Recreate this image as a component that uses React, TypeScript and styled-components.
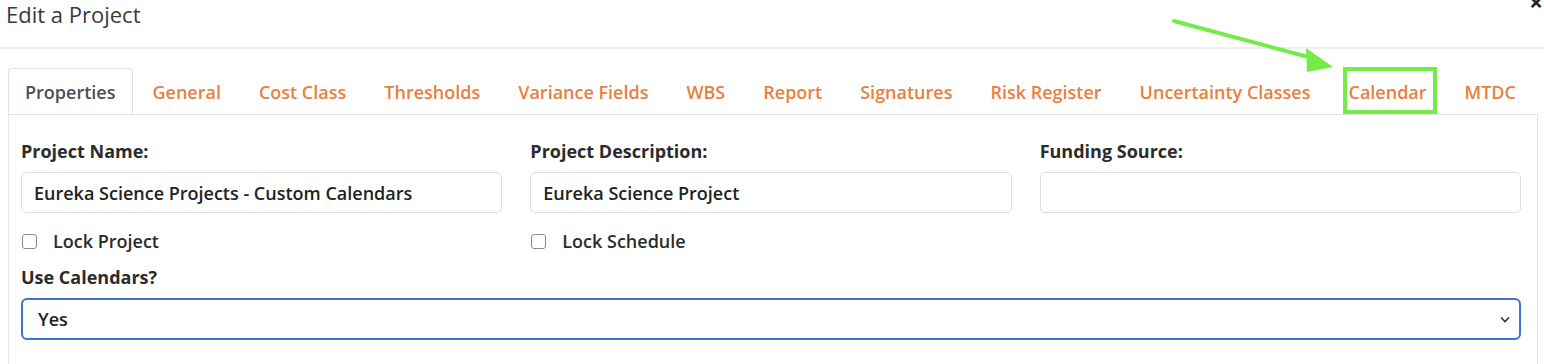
import styled, { createGlobalStyle } from "styled-components";

const GlobalStyle = createGlobalStyle`
  body {
    margin: 0;
    background: #ffffff;
    font-family: "Open Sans", "Liberation Sans", sans-serif;
    color: #333333;
  }
`;

const Modal = styled.div`
  position: relative;
  width: 1544px;
  height: 364px;
  overflow: hidden;
  background: #ffffff;
`;

const Header = styled.div`
  display: flex;
  justify-content: space-between;
  align-items: flex-start;
  height: 47px;
  border-bottom: 2px solid #eceef0;
  padding-left: 6px;
`;

const Title = styled.h1`
  margin: 0;
  font-size: 22px;
  font-weight: 400;
  line-height: 29px;
  color: #3a3a3a;
`;

const Close = styled.span`
  margin-top: -10px;
  margin-right: 1px;
  font-size: 24px;
  font-weight: 700;
  line-height: 24px;
  color: #222222;
`;

const Body = styled.div`
  padding: 19px 6px 0 8px;
`;

const TabList = styled.div`
  display: flex;
  height: 46px;
  border-bottom: 1px solid #dee2e6;
`;

const Tab = styled.div<{ $active?: boolean }>`
  height: 46px;
  line-height: 46px;
  padding: 0 ${(p) => (p.$active ? "17px 0 16px" : "18px")};
  border: 1px solid ${(p) => (p.$active ? "#dee2e6" : "transparent")};
  border-bottom-color: ${(p) => (p.$active ? "#ffffff" : "transparent")};
  border-radius: 4px 4px 0 0;
  font-size: 18px;
  font-weight: 600;
  color: ${(p) => (p.$active ? "#495057" : "#e8803f")};
  white-space: nowrap;
`;

const Panel = styled.div`
  height: 240px;
  border: 1px solid #e3e6e9;
  border-top: none;
  border-bottom: none;
  padding: 25px 16px 0 12px;
`;

const Grid = styled.div`
  display: grid;
  grid-template-columns: repeat(3, 1fr);
  column-gap: 28px;
`;

const Field = styled.div`
  display: flex;
  flex-direction: column;
`;

const Label = styled.label`
  font-size: 18px;
  font-weight: 700;
  line-height: 22px;
  color: #2b2b2b;
  margin-bottom: 10px;
`;

const TextInput = styled.div`
  height: 41px;
  box-sizing: border-box;
  border: 1px solid #dcdfe2;
  border-radius: 5px;
  padding: 0 12px;
  display: flex;
  align-items: center;
  font-size: 18px;
  font-weight: 600;
  color: #222222;
`;

const CheckRow = styled.div`
  display: flex;
  align-items: center;
  gap: 16px;
  margin-top: 18px;
  height: 20px;
  padding-left: 1px;
  font-size: 18px;
  font-weight: 600;
  color: #2b2b2b;
`;

const Box = styled.span`
  width: 13px;
  height: 13px;
  border: 1px solid #8a8a8a;
  border-radius: 3px;
  background: #ffffff;
`;

const SelectField = styled(Field)`
  margin-top: 15px;
`;

const Select = styled.div`
  height: 42px;
  box-sizing: border-box;
  border: 2px solid #3f71d6;
  border-radius: 6px;
  padding: 0 7px 0 15px;
  display: flex;
  align-items: center;
  justify-content: space-between;
  font-size: 18px;
  font-weight: 600;
  color: #222222;
`;

const Highlight = styled.div`
  position: absolute;
  left: 1343px;
  top: 67px;
  width: 86px;
  height: 39px;
  border: 4px solid #74ec48;
  pointer-events: none;
`;

const Arrow = styled.svg`
  position: absolute;
  left: 1160px;
  top: 10px;
  pointer-events: none;
`;

const tabs = [
  "Properties",
  "General",
  "Cost Class",
  "Thresholds",
  "Variance Fields",
  "WBS",
  "Report",
  "Signatures",
  "Risk Register",
  "Uncertainty Classes",
  "Calendar",
  "MTDC",
];

const fields = [
  { label: "Project Name:", value: "Eureka Science Projects - Custom Calendars", lock: "Lock Project" },
  { label: "Project Description:", value: "Eureka Science Project", lock: "Lock Schedule" },
  { label: "Funding Source:", value: "", lock: "" },
];

export default function App() {
  return (
    <Modal>
      <GlobalStyle />
      <Header>
        <Title>Edit a Project</Title>
        <Close>×</Close>
      </Header>
      <Body>
        <TabList>
          {tabs.map((t, i) => (
            <Tab key={t} $active={i === 0}>
              {t}
            </Tab>
          ))}
        </TabList>
        <Panel>
          <Grid>
            {fields.map((f) => (
              <Field key={f.label}>
                <Label>{f.label}</Label>
                <TextInput>{f.value}</TextInput>
                {f.lock && (
                  <CheckRow>
                    <Box />
                    {f.lock}
                  </CheckRow>
                )}
              </Field>
            ))}
          </Grid>
          <SelectField>
            <Label>Use Calendars?</Label>
            <Select>
              Yes
              <svg width="14" height="14" viewBox="0 0 14 14">
                <path d="M3 5.5 L7 9.5 L11 5.5" fill="none" stroke="#333" strokeWidth="1.6" />
              </svg>
            </Select>
          </SelectField>
        </Panel>
      </Body>
      <Arrow width="190" height="70" viewBox="0 0 190 70">
        <line x1="14" y1="11" x2="152" y2="48" stroke="#74ec48" strokeWidth="4" strokeLinecap="round" />
        <polygon points="146,38 173,57 147,62" fill="#74ec48" />
      </Arrow>
      <Highlight />
    </Modal>
  );
}
